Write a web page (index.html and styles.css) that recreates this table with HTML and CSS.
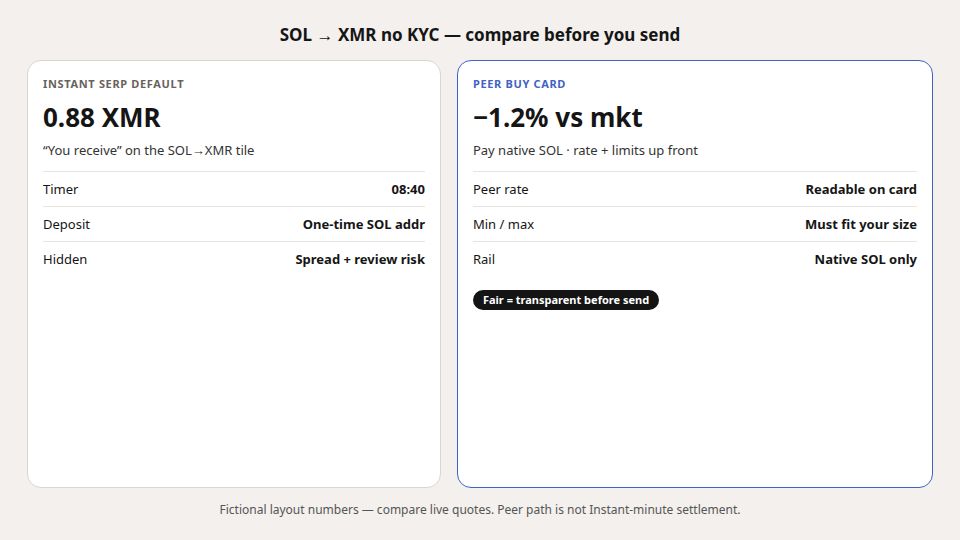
FILE: index.html
```html
<!DOCTYPE html>
<html>
  <head>
    <title>SOL to XMR no KYC</title>
    <link rel="stylesheet" href="styles.css">
  </head>
  <body>
    <div class="page">
      <h1>SOL → XMR no KYC — compare before you send</h1>
      <div class="cards">
        <div class="card">
          <div class="eyebrow">Instant SERP default</div>
          <div class="big">0.88 XMR</div>
          <div class="sub">“You receive” on the SOL→XMR tile</div>
          <div class="rows">
            <div class="row"><span>Timer</span><b>08:40</b></div>
            <div class="row"><span>Deposit</span><b>One-time SOL addr</b></div>
            <div class="row"><span>Hidden</span><b>Spread + review risk</b></div>
          </div>
        </div>
        <div class="card card-peer">
          <div class="eyebrow">Peer buy card</div>
          <div class="big">−1.2% vs mkt</div>
          <div class="sub">Pay native SOL · rate + limits up front</div>
          <div class="rows">
            <div class="row"><span>Peer rate</span><b>Readable on card</b></div>
            <div class="row"><span>Min / max</span><b>Must fit your size</b></div>
            <div class="row"><span>Rail</span><b>Native SOL only</b></div>
          </div>
          <div class="pill">Fair = transparent before send</div>
        </div>
      </div>
      <p class="note">Fictional layout numbers — compare live quotes. Peer path is not Instant-minute settlement.</p>
    </div>
  </body>
</html>
```

FILE: styles.css
```css
html, body {
  margin: 0;
  height: 100%;
}

body {
  background-color: #f3f0ed;
  color: #151515;
  font-family: "Noto Sans", "Open Sans", sans-serif;
}

.page {
  box-sizing: border-box;
  height: 100%;
  display: flex;
  flex-direction: column;
  padding: 23px 27px 22px;
}

h1 {
  margin: 0 0 13px;
  font-size: 17px;
  line-height: 24px;
  text-align: center;
  font-weight: 700;
}

.cards {
  flex: 1;
  display: grid;
  grid-template-columns: 1fr 1.15fr;
  gap: 16px;
}

.card {
  background: #fff;
  border: 1px solid #d9d5d1;
  border-radius: 14px;
  padding: 16px 15px 15px;
}

.card-peer {
  border-color: #3f62c6;
}

.eyebrow {
  font-size: 11px;
  line-height: 14px;
  font-weight: 700;
  letter-spacing: 0.06em;
  text-transform: uppercase;
  color: #68625e;
}

.card-peer .eyebrow {
  color: #3f62c6;
}

.big {
  margin-top: 10px;
  font-size: 26px;
  line-height: 32px;
  font-weight: 700;
}

.sub {
  margin-top: 8px;
  font-size: 13px;
  line-height: 18px;
  color: #333;
}

.rows {
  margin-top: 12px;
}

.row {
  display: flex;
  justify-content: space-between;
  border-top: 1px solid #e6e3e0;
  padding: 8px 0;
  font-size: 13px;
  line-height: 18px;
}

.row b {
  font-weight: 700;
}

.pill {
  display: inline-block;
  margin-top: 14px;
  background: #141414;
  color: #fff;
  font-size: 11px;
  line-height: 20px;
  font-weight: 700;
  padding: 0 10px;
  border-radius: 10px;
}

.note {
  margin: 14px 0 0;
  font-size: 12px;
  line-height: 16px;
  text-align: center;
  color: #555;
}
```
